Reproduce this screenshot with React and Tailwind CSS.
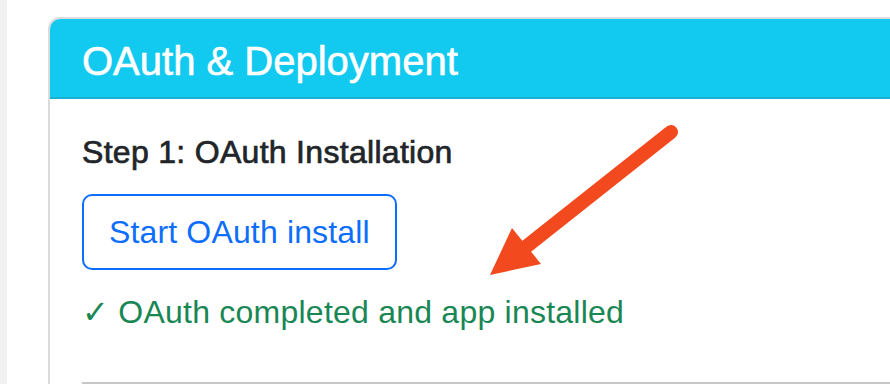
import React from "react";

// Orange annotation arrow drawn over the card
const Arrow = () => (
  <svg
    className="absolute left-0 top-0 pointer-events-none"
    width="890"
    height="384"
    viewBox="0 0 890 384"
  >
    <line x1="671" y1="132" x2="522" y2="250" stroke="#f24a1e" strokeWidth="14" strokeLinecap="round" />
    <polygon points="490,275 512,228 541,264" fill="#f24a1e" />
  </svg>
);

export default function App() {
  return (
    <div
      className="relative flex h-[384px] w-[890px] overflow-hidden bg-white"
      style={{ fontFamily: '"Liberation Sans", Arial, sans-serif' }}
    >
      <div className="w-[7px] shrink-0 bg-[#f1f1f1]" />
      <div className="pl-[41px] pt-[17px]">
        <div className="w-[880px] rounded-[12px] border-2 border-[#dcdcdc] overflow-hidden">
          <div className="bg-[#12c9ef] border-b-2 border-[#15b2d2] px-8 pt-[18px] pb-[12px]">
            <h4 className="text-[40px] leading-[48px] text-white [-webkit-text-stroke:0.6px_white]">
              OAuth &amp; Deployment
            </h4>
          </div>
          <div className="px-8 pt-[34px] pb-[60px]">
            <h6 className="text-[32px] leading-[38px] text-[#212529] mb-[23px] tracking-[0.3px] [-webkit-text-stroke:0.7px_#212529]">
              Step 1: OAuth Installation
            </h6>
            <button className="rounded-[10px] border-2 border-[#0d6efd] px-[25px] py-[12px] text-[32px] leading-[48px] tracking-[0.15px] text-[#0d6efd]">
              Start OAuth install
            </button>
            <div className="mt-[18px] text-[32px] leading-[48px] tracking-[0.23px] text-[#198754]">
              ✓ OAuth completed and app installed
            </div>
            <hr className="mt-[46px] border-t-2 border-[#c8c8c8]" />
          </div>
        </div>
      </div>
      <Arrow />
    </div>
  );
}
